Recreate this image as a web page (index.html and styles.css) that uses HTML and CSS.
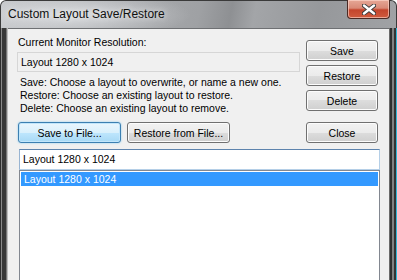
FILE: index.html
```html
<!DOCTYPE html>
<html lang="en">
<head>
  <meta charset="UTF-8" />
  <title>Custom Layout Save/Restore</title>
  <link rel="stylesheet" href="styles.css">
</head>
<body>

  <div class="window">
    <div class="titlebar">
      <span class="title">Custom Layout Save/Restore</span>
      <button class="close-btn" aria-label="Close">
        <svg width="14" height="11" viewBox="0 0 14 11">
          <path d="M2 1.5 L12 9.5 M12 1.5 L2 9.5" stroke="#3a3a3a" stroke-width="4.2" stroke-linecap="round" />
          <path d="M2 1.5 L12 9.5 M12 1.5 L2 9.5" stroke="#ffffff" stroke-width="2.4" stroke-linecap="round" />
        </svg>
      </button>
    </div>

    <div class="frame">
      <div class="client">

        <!-- Resolution and help -->
        <div class="top">
          <div class="info">
            <div class="label">Current Monitor Resolution:</div>
            <div class="readonly">Layout 1280 x 1024</div>
            <p class="help">
              Save: Choose a layout to overwrite, or name a new one.<br>
              Restore: Choose an existing layout to restore.<br>
              Delete: Choose an existing layout to remove.
            </p>
          </div>
          <div class="side-buttons">
            <button class="btn">Save</button>
            <button class="btn">Restore</button>
            <button class="btn">Delete</button>
          </div>
        </div>

        <!-- File buttons -->
        <div class="file-row">
          <button class="btn btn-file focused">Save to File...</button>
          <button class="btn btn-file">Restore from File...</button>
          <button class="btn btn-close">Close</button>
        </div>

        <!-- Layout name and list -->
        <div class="name-edit">Layout 1280 x 1024</div>
        <ul class="layout-list">
          <li class="selected">Layout 1280 x 1024</li>
        </ul>

      </div>
    </div>
  </div>

</body>
</html>
```

FILE: styles.css
```css
body {
  margin: 0;
  background: #ffffff;
  overflow: hidden;
}
.window {
  width: 397px;
  height: 290px;
  display: flex;
  flex-direction: column;
  background: #9a9c9f;
  border-radius: 6px 6px 0 0;
  overflow: hidden;
}
.titlebar {
  height: 28px;
  flex-shrink: 0;
  display: flex;
  align-items: flex-start;
  justify-content: space-between;
  box-sizing: border-box;
  border: 1px solid #3a3a3a;
  border-bottom: none;
  border-radius: 6px 6px 0 0;
  background:
    radial-gradient(ellipse 120px 24px at 70px 14px, rgba(225,227,230,0.8), rgba(225,227,230,0) 100%),
    linear-gradient(100deg, #c2c4c7 0%, #a9abae 30%, #9fa1a4 50%, #8e9093 58%, #a3a5a8 64%, #96989b 80%, #a0a2a5 100%);
}
.title {
  font-family: "Liberation Sans", Arial, sans-serif;
  font-size: 12px;
  color: #101010;
  padding: 6px 0 0 7px;
  text-shadow: 0 0 6px rgba(255,255,255,0.9);
}
.close-btn {
  width: 43px;
  height: 19px;
  margin: -1px 6px 0 0;
  padding: 0;
  display: flex;
  align-items: center;
  justify-content: center;
  border: 1px solid #4a2a24;
  border-top: none;
  border-radius: 0 0 4px 4px;
  background: linear-gradient(#e6a796 0%, #d98a77 45%, #c4452c 55%, #cf5b3e 100%);
  box-shadow: inset 0 0 0 1px rgba(255,220,210,0.6);
}
.close-btn svg {
  display: block;
}
.frame {
  flex: 1;
  display: flex;
  padding: 0 8px 0 8px;
  background:
    linear-gradient(to right, #2e2e2e 0 1px, #8a8a8a 1px 2px, #383838 2px 6px, #777 6px 7px, #bdbdbd 7px 8px, transparent 8px),
    linear-gradient(to left, #2fb6d6 0 1px, #333 1px 3px, #808080 3px 5px, #2e2e2e 5px 7px, #6a6a6a 7px 8px, transparent 8px),
    #4d4f52;
}
.client {
  flex: 1;
  background: #f0f0f0;
  border-top: 1px solid #6e7073;
  padding: 7px 0 0 9px;
  font-family: "Liberation Sans", Arial, sans-serif;
  font-size: 10.5px;
  color: #000;
}
.top {
  display: grid;
  grid-template-columns: 283px 72px;
  column-gap: 6px;
}
.label {
  line-height: 13px;
  padding-left: 1px;
}
.readonly {
  margin-top: 3px;
  height: 20px;
  box-sizing: border-box;
  border: 1px solid #d6d6d6;
  padding: 0 3px;
  line-height: 18px;
}
.help {
  margin: 4px 0 0 0;
  padding-left: 3px;
  line-height: 13px;
}
.side-buttons {
  margin-top: 4px;
  display: flex;
  flex-direction: column;
  gap: 4px;
}
.btn {
  height: 21px;
  padding: 0;
  font-family: "Liberation Sans", Arial, sans-serif;
  font-size: 10.5px;
  color: #000;
  border: 1px solid #707070;
  border-radius: 3px;
  background: linear-gradient(#f2f2f2 0%, #ebebeb 50%, #dddddd 50%, #cfcfcf 100%);
  box-shadow: inset 0 0 0 1px #fcfcfc;
}
.file-row {
  margin-top: 7px;
  display: flex;
  padding-left: 1px;
}
.btn-file {
  width: 103px;
  margin-right: 6px;
}
.btn-close {
  width: 72px;
  margin-left: auto;
  margin-right: 11px;
}
.focused {
  border-color: #3c7fb1;
  background: linear-gradient(#eaf6fd 0%, #d9f0fc 50%, #bee6fd 50%, #a7d9f5 100%);
  box-shadow: inset 0 0 0 1px #c2e6fb, 0 0 2px #7ec8f0;
}
.name-edit {
  margin: 6px 0 0 2px;
  width: 361px;
  height: 21px;
  box-sizing: border-box;
  background: #fff;
  border: 1px solid;
  border-color: #5d83ad #b5cfe7 #b5cfe7 #98b4d2;
  padding: 0 3px;
  line-height: 19px;
}
.layout-list {
  list-style: none;
  margin: 0 0 0 2px;
  width: 361px;
  height: 120px;
  box-sizing: border-box;
  background: #fff;
  border: 1px solid #828790;
  padding: 1px;
}
.layout-list li {
  height: 14px;
  line-height: 14px;
  padding-left: 3px;
}
.layout-list .selected {
  background: #3399ff;
  color: #fff;
}
```
